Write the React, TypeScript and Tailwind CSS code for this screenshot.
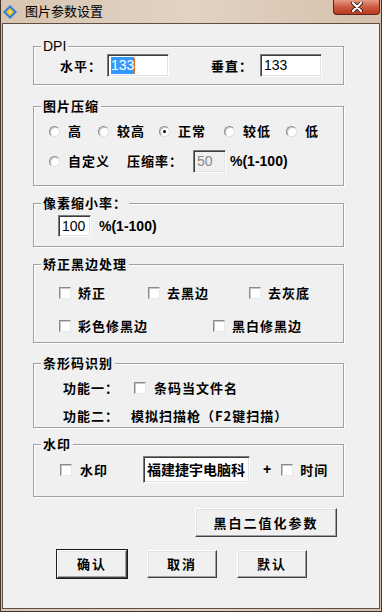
import React from 'react';

const cjk = { fontFamily: '"Noto Sans CJK SC", "Noto Sans", sans-serif' };
const latin = { fontFamily: '"Liberation Sans", Arial, sans-serif' };

const Radio = ({ checked = false }: { checked?: boolean }) => (
  <span className="w-[11px] h-[11px] rounded-full bg-white border border-t-[#8a8a8a] border-l-[#8a8a8a] border-r-[#e0e0e0] border-b-[#e0e0e0] shadow-[inset_1px_1px_0_#c8c8c8] flex items-center justify-center shrink-0">
    {checked && <span className="w-[3px] h-[3px] rounded-full bg-black" />}
  </span>
);

const Check = ({ className = '' }: { className?: string }) => (
  <span className={'block w-[12px] h-[12px] bg-white border border-t-[#8a8a8a] border-l-[#8a8a8a] border-r-[#e8e8e8] border-b-[#e8e8e8] shadow-[inset_1px_1px_0_#c8c8c8] shrink-0 ' + className} />
);

const Field = ({ className, children }: { className: string; children?: React.ReactNode }) => (
  <div
    className={
      'bg-white border border-t-[#7a7a7a] border-l-[#7a7a7a] border-r-white border-b-white shadow-[inset_1px_1px_0_#3c3c3c,inset_-1px_-1px_0_#e3e3e3] flex items-center px-[3px] overflow-hidden whitespace-nowrap ' +
      className
    }
  >
    {children}
  </div>
);

const Group = ({ title, latinTitle, className, children }: { title: string; latinTitle?: boolean; className: string; children: React.ReactNode }) => (
  <div className={'relative ml-[30px] w-[311px] border border-[#a0a0a0] shadow-[1px_1px_0_#fff,inset_1px_1px_0_#fff] ' + className}>
    <span
      className={'absolute -top-[9px] left-[7px] px-[2px] bg-[#f0f0f0] leading-[16px] ' + (latinTitle ? 'text-[14px]' : 'text-[13px] font-bold tracking-[1px]')}
      style={latinTitle ? latin : cjk}
    >
      {title}
    </span>
    {children}
  </div>
);

const Btn = ({ label, className, primary }: { label: string; className: string; primary?: boolean }) => (
  <div
    className={
      'flex items-center justify-center bg-[#f0f0f0] border border-t-white border-l-white border-r-[#404040] border-b-[#404040] shadow-[inset_-1px_-1px_0_#a0a0a0,inset_1px_1px_0_#e3e3e3] text-[13px] font-bold tracking-[2px] ' +
      (primary ? 'outline outline-1 outline-[#1a1a1a] ' : '') +
      className
    }
    style={cjk}
  >
    {label}
  </div>
);

export default function App() {
  return (
    <div className="w-[382px] h-[612px] flex flex-col bg-gradient-to-r from-[#d8c5b1] via-[#e2d3c4] to-[#d4c0ab] border-x border-b border-[#3f332b]" style={cjk}>
      {/* title bar */}
      <div className="h-[23px] flex items-start shrink-0">
        <svg width="14" height="14" viewBox="0 0 14 14" className="ml-[2px] mt-[5px]">
          <path d="M7 0 L14 7 L7 14 L0 7 Z" fill="#2f7fd8" />
          <path d="M7 3 L11 7 L7 11 L3 7 Z" fill="#f6c528" />
          <path d="M7 6 L8 7 L7 8 L6 7 Z" fill="#fff" />
        </svg>
        <span className="ml-[8px] mt-[3px] text-[13px] leading-[16px] text-black">图片参数设置</span>
        <div className="ml-auto mr-[1px] w-[47px] h-[15px] rounded-b-[4px] border border-t-0 border-[#5e2618] bg-gradient-to-b from-[#e59a84] via-[#cc5a40] to-[#b83a22] flex items-center justify-center">
          <svg width="14" height="10" viewBox="0 0 14 10">
            <path d="M3 1 L11 9 M11 1 L3 9" stroke="#3d1a12" strokeWidth="4" strokeLinecap="round" />
            <path d="M3 1 L11 9 M11 1 L3 9" stroke="#fff" strokeWidth="2.2" strokeLinecap="round" />
          </svg>
        </div>
      </div>

      {/* client area */}
      <div className="flex-1 mx-[1px] mb-[2px] border border-[#5e4f45] bg-[#f0f0f0] flex flex-col text-black">
        <Group title="DPI" latinTitle className="mt-[22px] h-[39px] pt-[7px]">
          <div className="flex items-center h-[23px] pl-[26px] text-[13px] font-bold tracking-[1px]">
            <span className="w-[47px]">水平：</span>
            <Field className="w-[62px] h-[23px]">
              <span className="bg-[#3399ff] text-white text-[14px] leading-[17px] font-normal tracking-normal" style={latin}>133</span>
              <span className="w-[1px] h-[16px] bg-[#e07020]" />
            </Field>
            <span className="ml-[42px] w-[49px]">垂直：</span>
            <Field className="w-[62px] h-[23px]">
              <span className="text-[14px] font-normal tracking-normal" style={latin}>133</span>
            </Field>
          </div>
        </Group>

        <Group title="图片压缩" className="mt-[21px] h-[80px] pt-[14px] text-[13px] font-bold tracking-[1px]">
          <div className="flex items-center h-[20px] pl-[15px]">
            {[
              ['高', 49, false],
              ['较高', 61, false],
              ['正常', 65, true],
              ['较低', 62, false],
              ['低', 40, false],
            ].map(([l, w, c]) => (
              <div key={l as string} className="flex items-center gap-[8px]" style={{ width: w as number }}>
                <Radio checked={c as boolean} />
                <span>{l as string}</span>
              </div>
            ))}
          </div>
          <div className="flex items-center h-[20px] mt-[10px] pl-[15px]">
            <Radio />
            <span className="ml-[8px] w-[59px]">自定义</span>
            <span className="w-[66px]">压缩率：</span>
            <Field className="w-[33px] h-[23px] !bg-[#f0f0f0]">
              <span className="text-[14px] font-normal tracking-normal text-[#8a8a8a]" style={latin}>50</span>
            </Field>
            <span className="ml-[4px] text-[14px] tracking-normal" style={latin}>%(1-100)</span>
          </div>
        </Group>

        <Group title="像素缩小率：" className="mt-[17px] h-[44px] pt-[11px]">
          <div className="flex items-center h-[22px] pl-[24px]">
            <Field className="w-[33px] h-[22px]">
              <span className="text-[14px]" style={latin}>100</span>
            </Field>
            <span className="ml-[8px] text-[14px] font-bold" style={latin}>%(1-100)</span>
          </div>
        </Group>

        <Group title="矫正黑边处理" className="mt-[17px] h-[79px] pt-[18px] text-[13px] font-bold tracking-[1px]">
          <div className="flex items-center h-[20px] pl-[25px]">
            <div className="flex items-center gap-[7px] w-[89px]"><Check /><span>矫正</span></div>
            <div className="flex items-center gap-[7px] w-[101px]"><Check /><span>去黑边</span></div>
            <div className="flex items-center gap-[7px]"><Check /><span>去灰底</span></div>
          </div>
          <div className="flex items-center h-[20px] mt-[13px] pl-[25px]">
            <div className="flex items-center gap-[7px] w-[154px]"><Check /><span>彩色修黑边</span></div>
            <div className="flex items-center gap-[7px]"><Check /><span>黑白修黑边</span></div>
          </div>
        </Group>

        <Group title="条形码识别" className="mt-[20px] h-[65px] pt-[14px] text-[13px] font-bold tracking-[1px]">
          <div className="flex items-center h-[20px] pl-[29px]">
            <span className="w-[71px]">功能一：</span>
            <Check />
            <span className="ml-[8px]">条码当文件名</span>
          </div>
          <div className="flex items-center h-[20px] mt-[8px] pl-[29px]">
            <span className="w-[68px]">功能二：</span>
            <span>模拟扫描枪（F2键扫描）</span>
          </div>
        </Group>

        <Group title="水印" className="mt-[16px] h-[53px] pt-[11px] text-[13px] font-bold tracking-[1px]">
          <div className="flex items-center h-[27px] pl-[26px]">
            <Check />
            <span className="ml-[8px] w-[63px]">水印</span>
            <Field className="w-[107px] h-[27px]">
              <span className="text-[14px] tracking-[0px]">福建捷宇电脑科</span>
            </Field>
            <span className="ml-[13px] text-[14px]" style={latin}>+</span>
            <Check className="ml-[9px]" />
            <span className="ml-[7px]">时间</span>
          </div>
        </Group>

        <div className="flex justify-end mt-[11px] mr-[42px]">
          <Btn label="黑白二值化参数" className="w-[142px] h-[29px]" />
        </div>

        <div className="flex gap-[20px] mt-[13px] ml-[54px]">
          <Btn label="确认" className="w-[70px] h-[28px]" primary />
          <Btn label="取消" className="w-[70px] h-[28px]" />
          <Btn label="默认" className="w-[70px] h-[28px]" />
        </div>
      </div>
    </div>
  );
}
